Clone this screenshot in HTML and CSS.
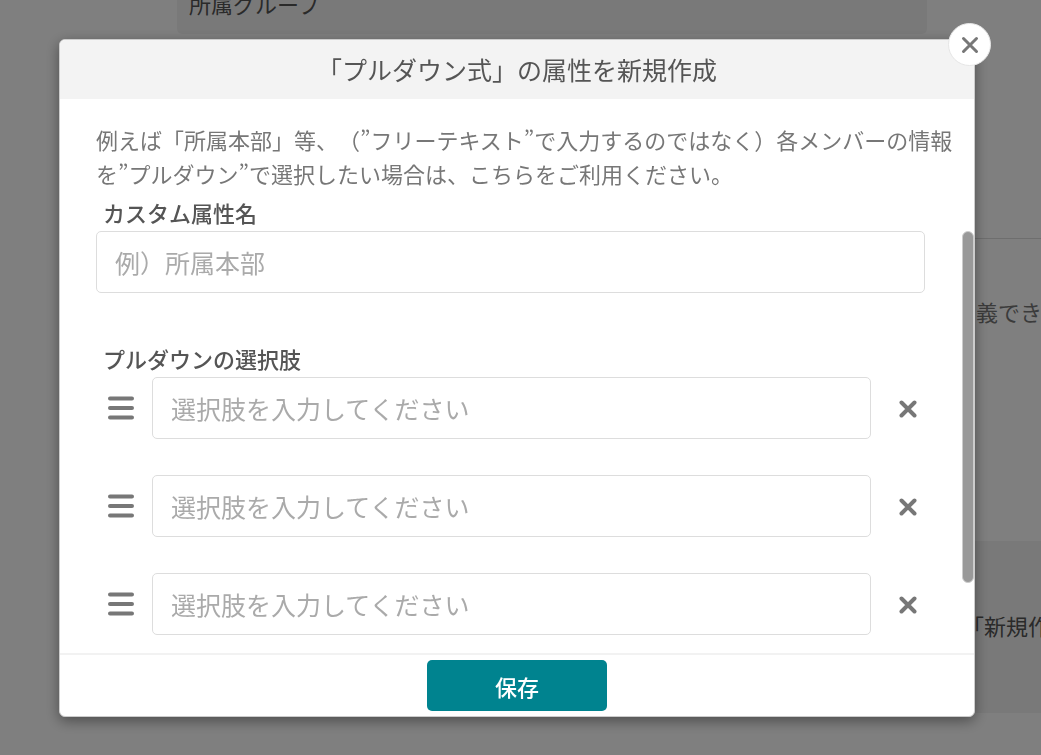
FILE: index.html
```html
<!DOCTYPE html>
<html lang="ja">
<head>
    <meta charset="UTF-8">
    <meta name="viewport" content="width=device-width, initial-scale=1.0">
    <title>属性を新規作成</title>
    <link rel="stylesheet" href="styles.css">
</head>
<body>
    <!-- Page under the dialog -->
    <div class="page">
        <div class="group-panel">所属グループ</div>
        <div class="divider"></div>
        <p class="page-note">義でき</p>
        <div class="page-panel">
            <p class="panel-note">「新規作</p>
        </div>
    </div>

    <div class="overlay">
        <div class="modal" role="dialog" aria-modal="true" aria-labelledby="modal-title">
            <button type="button" class="modal-close" aria-label="閉じる">
                <svg class="icon-x" viewBox="0 0 18 18"><path d="M2.5 2.5l13 13M15.5 2.5l-13 13"/></svg>
            </button>

            <header class="modal-header">
                <h1 id="modal-title">「プルダウン式」の属性を新規作成</h1>
            </header>

            <form class="modal-form">
                <div class="modal-body">
                    <p class="description">例えば「所属本部」等、（”フリーテキスト”で入力するのではなく）各メンバーの情報を”プルダウン”で選択したい場合は、こちらをご利用ください。</p>

                    <div class="fields">
                        <label class="field-label" for="attr-name">カスタム属性名</label>
                        <input type="text" class="text-field" id="attr-name" placeholder="例）所属本部">

                        <fieldset class="options">
                            <legend class="field-label">プルダウンの選択肢</legend>
                            <div class="option-row">
                                <svg class="icon-menu" viewBox="0 0 26 24"><path d="M2 2.5h22M2 12h22M2 21.5h22"/></svg>
                                <input type="text" class="text-field" aria-label="選択肢1" placeholder="選択肢を入力してください">
                                <button type="button" class="remove-btn" aria-label="削除">
                                    <svg class="icon-x" viewBox="0 0 18 18"><path d="M2.5 2.5l13 13M15.5 2.5l-13 13"/></svg>
                                </button>
                            </div>
                            <div class="option-row">
                                <svg class="icon-menu" viewBox="0 0 26 24"><path d="M2 2.5h22M2 12h22M2 21.5h22"/></svg>
                                <input type="text" class="text-field" aria-label="選択肢2" placeholder="選択肢を入力してください">
                                <button type="button" class="remove-btn" aria-label="削除">
                                    <svg class="icon-x" viewBox="0 0 18 18"><path d="M2.5 2.5l13 13M15.5 2.5l-13 13"/></svg>
                                </button>
                            </div>
                            <div class="option-row">
                                <svg class="icon-menu" viewBox="0 0 26 24"><path d="M2 2.5h22M2 12h22M2 21.5h22"/></svg>
                                <input type="text" class="text-field" aria-label="選択肢3" placeholder="選択肢を入力してください">
                                <button type="button" class="remove-btn" aria-label="削除">
                                    <svg class="icon-x" viewBox="0 0 18 18"><path d="M2.5 2.5l13 13M15.5 2.5l-13 13"/></svg>
                                </button>
                            </div>
                        </fieldset>
                    </div>

                    <div class="scroll-thumb"></div>
                </div>

                <footer class="modal-footer">
                    <button type="submit" class="save-btn">保存</button>
                </footer>
            </form>
        </div>
    </div>
</body>
</html>
```
FILE: styles.css
```css
:root {
    --text: #555;
    --text-light: #777;
    --placeholder: #aaa;
    --border: #ddd;
    --panel: #f3f3f3;
    --primary: #00838f;
    --radius: 5px;
}

* {
    box-sizing: border-box;
    margin: 0;
    padding: 0;
}

body {
    height: 100vh;
    overflow: hidden;
    background: white;
    color: var(--text);
    font-family: "Noto Sans CJK JP", sans-serif;
    font-size: 22px;
    line-height: 34px;
    text-spacing-trim: space-all;
}

button {
    border: none;
    cursor: pointer;
    font-family: inherit;
}

/* Page under the dialog */
.page {
    height: 100vh;
    overflow: hidden;
    white-space: nowrap;
}

.group-panel {
    display: flex;
    align-items: flex-end;
    height: 34px;
    margin: 0 114px 0 177px;
    padding: 0 12px 14px;
    background: var(--panel);
    border-radius: 0 0 var(--radius) var(--radius);
}

.divider {
    margin: 204px 0 0 177px;
    border-top: 1px solid var(--border);
}

.page-note {
    width: 65px;
    margin: 55px 0 0 auto;
    color: var(--text-light);
}

.page-panel {
    height: 172px;
    margin: 213px 0 0 177px;
    padding-top: 67px;
    background: var(--panel);
}

.panel-note {
    width: 79px;
    margin-left: auto;
}

/* Dialog */
.overlay {
    position: fixed;
    inset: 0;
    padding: 39px 66px 38px 59px;
    background: rgba(0, 0, 0, 0.5);
}

.modal {
    position: relative;
    display: flex;
    flex-direction: column;
    height: 100%;
    background: white;
    border: 1px solid #ccc;
    border-radius: 6px;
    box-shadow: 0 4px 14px rgba(0, 0, 0, 0.4);
}

.modal-close {
    position: absolute;
    top: -17px;
    right: -17px;
    z-index: 1;
    display: grid;
    place-items: center;
    width: 43px;
    height: 43px;
    background: white;
    border: 1px solid #e6e6e6;
    border-radius: 50%;
}

.modal-header {
    flex: none;
    padding: 12px 0 13px;
    background: var(--panel);
    border-radius: var(--radius) var(--radius) 0 0;
    text-align: center;
}

h1 {
    font-size: 25px;
    font-weight: 400;
    line-height: 34px;
}

.modal-form {
    flex: 1;
    display: flex;
    flex-direction: column;
    min-height: 0;
}

.modal-body {
    position: relative;
    flex: 1;
    min-height: 0;
    padding: 23px 18px 0 36px;
    overflow: hidden;
}

.description {
    color: var(--text-light);
}

.fields {
    margin-right: 31px;
    padding-top: 5px;
}

.field-label {
    display: block;
    padding: 0 0 2px 7px;
    font-weight: 500;
}

.text-field {
    display: block;
    width: 100%;
    height: 62px;
    padding: 0 18px;
    border: 1px solid var(--border);
    border-radius: var(--radius);
    color: var(--text);
    font-family: inherit;
    font-size: 25px;
}

.text-field::placeholder {
    color: var(--placeholder);
}

.options {
    margin-top: 48px;
    border: none;
}

.option-row {
    display: grid;
    grid-template-columns: 26px 1fr 36px;
    align-items: center;
    gap: 18px;
    margin-bottom: 36px;
    padding-left: 12px;
}

.icon-menu {
    width: 26px;
    height: 24px;
    fill: none;
    stroke: var(--text-light);
    stroke-width: 4;
    stroke-linecap: round;
}

.icon-x {
    display: block;
    width: 18px;
    height: 18px;
    fill: none;
    stroke: var(--text-light);
    stroke-width: 3;
    stroke-linecap: round;
}

.remove-btn {
    display: grid;
    place-items: center;
    height: 36px;
    padding: 2px 0 0 2px;
    background: none;
}

.remove-btn .icon-x {
    stroke-width: 4;
}

.scroll-thumb {
    position: absolute;
    top: 132px;
    right: 0;
    width: 12px;
    height: 352px;
    background: #999;
    border: 1px solid #ccc;
    border-radius: 6px;
}

.modal-footer {
    flex: none;
    display: flex;
    justify-content: center;
    padding: 5px 0;
    border-top: 2px solid #f2f2f2;
}

.save-btn {
    width: 180px;
    height: 51px;
    background: var(--primary);
    border-radius: var(--radius);
    color: white;
    font-size: 22px;
    font-weight: 500;
}
```
